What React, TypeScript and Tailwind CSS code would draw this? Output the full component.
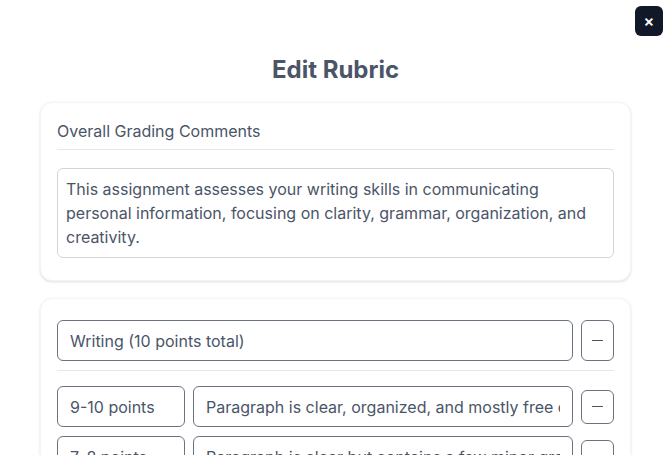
import React, { useState } from "react";

type Level = {
  points: string;
  text: string;
};

const levels: Level[] = [
  {
    points: "9-10 points",
    text: "Paragraph is clear, organized, and mostly free of errors in grammar and spelling.",
  },
  {
    points: "7-8 points",
    text: "Paragraph is clear but contains a few minor grammar or spelling errors.",
  },
  {
    points: "5-6 points",
    text: "Paragraph lacks some clarity and has several errors.",
  },
];

const MinusButton = ({ className = "" }: { className?: string }) => (
  <button
    className={`flex w-[33px] shrink-0 items-center justify-center rounded-md border border-[#6b7280] bg-white text-[#4a5568] ${className}`}
  >
    <span className="block h-[1.5px] w-[11px] bg-[#4a5568]" />
  </button>
);

const App: React.FC = () => {
  const [comments, setComments] = useState(
    "This assignment assesses your writing skills in communicating personal information, focusing on clarity, grammar, organization, and creativity."
  );
  const [title, setTitle] = useState("Writing (10 points total)");

  return (
    <div className="relative min-h-screen bg-white font-['Inter','Liberation_Sans',sans-serif] text-[#4a5568]">
      {/* Close */}
      <button className="absolute right-2 top-1.5 flex h-[30px] w-[28px] items-center justify-center rounded-md bg-[#111827] text-[16px] font-semibold leading-none text-white">
        ×
      </button>

      <div className="px-10 pt-[54px]">
        <h1 className="mb-4 text-center text-2xl font-bold leading-8 text-[#4a5568]">
          Edit Rubric
        </h1>

        {/* Overall comments card */}
        <div className="rounded-xl border border-[#f3f4f6] bg-white px-4 pb-[22px] pt-4 shadow-sm">
          <div className="border-b border-[#e5e7eb] pb-[6px] text-base leading-6">
            Overall Grading Comments
          </div>
          <textarea
            value={comments}
            onChange={(e) => setComments(e.target.value)}
            rows={3}
            className="mt-[18px] block h-[90px] w-full resize-none rounded-md border border-[#d1d5db] px-2 py-2 text-base leading-6 text-[#4a5568] outline-none"
          />
        </div>

        {/* Criterion card */}
        <div className="mt-[17px] rounded-xl border border-[#f3f4f6] bg-white px-4 pb-4 pt-[21px] shadow-sm">
          <div className="flex gap-2">
            <input
              value={title}
              onChange={(e) => setTitle(e.target.value)}
              className="h-[41px] min-w-0 flex-1 rounded-md border border-[#6b7280] px-3 text-base text-[#4a5568] outline-none"
            />
            <MinusButton />
          </div>
          <div className="mt-[9px] border-t border-[#e5e7eb]" />

          <div className="mt-[15px] flex flex-col gap-[9px]">
            {levels.map((level) => (
              <div key={level.points} className="flex items-center gap-2">
                <input
                  defaultValue={level.points}
                  className="h-[41px] w-32 shrink-0 rounded-md border border-[#6b7280] px-3 text-base text-[#4a5568] outline-none"
                />
                <input
                  defaultValue={level.text}
                  className="h-[41px] min-w-0 flex-1 rounded-md border border-[#6b7280] px-3 text-base text-[#4a5568] outline-none"
                />
                <MinusButton className="h-[34px]" />
              </div>
            ))}
          </div>
        </div>
      </div>
    </div>
  );
};

export default App;
